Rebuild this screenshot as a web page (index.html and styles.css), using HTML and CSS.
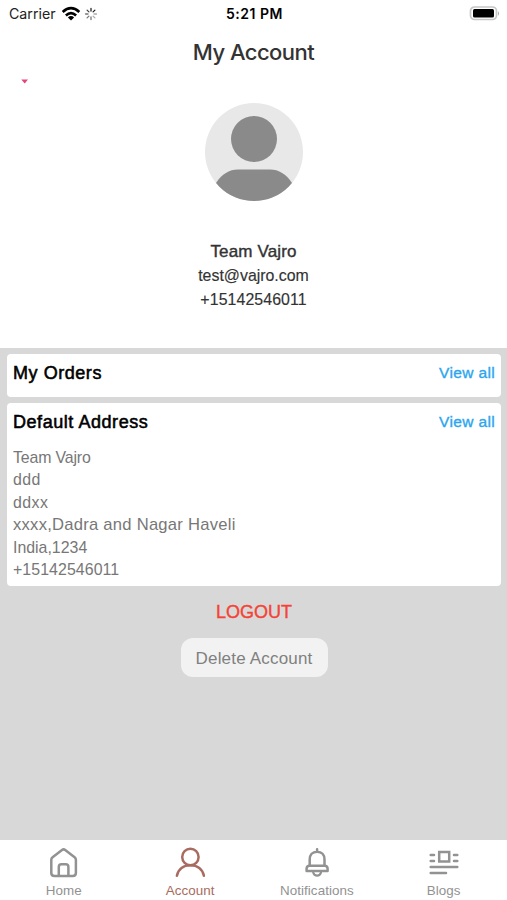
FILE: index.html
```html
<!DOCTYPE html>
<html lang="en">
<head>
<meta charset="utf-8">
<title>My Account</title>
<link rel="stylesheet" href="styles.css">
</head>
<body>
<div class="status">
  <div class="carrier">
    <span>Carrier</span>
    <svg class="wifi" width="20" height="16" viewBox="0 0 20 16"><g fill="none" stroke="#000" stroke-width="2.7"><path d="M1.7 5.9Q10-1.7 18.3 5.9"/><path d="M4.9 9.4Q10 4.8 15.1 9.4"/></g><path d="M6.9 11.4Q10 8.8 13.1 11.4L10 14.6Z"/></svg>
    <svg class="spinner" width="14" height="14" viewBox="-7 -7 14 14" stroke-width="1.3" stroke-linecap="round"><g stroke="#222"><path d="M0-3V-5.5M2.1-2.1L3.9-3.9"/></g><g stroke="#aaa"><path d="M3 0H5.5M2.1 2.1L3.9 3.9"/></g><g stroke="#777"><path d="M0 3V5.5M-2.1 2.1L-3.9 3.9M-3 0H-5.5"/></g><path stroke="#444" d="M-2.1-2.1L-3.9-3.9"/></svg>
  </div>
  <div class="time">5:21 PM</div>
  <svg class="battery" width="31" height="16" viewBox="0 0 31 16"><rect x="1.5" y="1" width="26" height="12.500" rx="4" fill="#fff" stroke="#c6c6c6" stroke-width="1.7"/><rect x="4" y="3" width="21" height="8.600" rx="1.5"/><path d="M29 5.2Q31 7.4 29 9.8Z" fill="#aaa"/></svg>
</div>
<h1>My Account</h1>
<div class="marker"><svg width="8" height="5" viewBox="0 0 8 5"><path d="M.3.5H7L3.700 4.500Z" fill="#e7447c"/></svg></div>
<section class="profile">
  <svg class="avatar" width="98" height="98" viewBox="0 0 98 98"><defs><clipPath id="disc"><circle cx="49" cy="49" r="49"/></clipPath></defs><g clip-path="url(#disc)"><rect width="98" height="98" fill="#e8e8e8"/><circle cx="49" cy="36" r="23" fill="#8a8a8a"/><path d="M11 80C17 71 24 66.500 33 66.500H65C74 66.500 81 71 87 80V98H11Z" fill="#8a8a8a"/></g></svg>
  <div class="name">Team Vajro</div>
  <div class="contact">test@vajro.com</div>
  <div class="contact phone">+15142546011</div>
</section>
<main>
  <section class="card orders">
    <header><h2>My Orders</h2><a>View all</a></header>
  </section>
  <section class="card address">
    <header><h2>Default Address</h2><a>View all</a></header>
    <div class="lines">
      <div class="person">Team Vajro</div>
      <div class="street">ddd</div>
      <div class="street">ddxx</div>
      <div class="region">xxxx,Dadra and Nagar Haveli</div>
      <div>India,1234</div>
      <div class="tel">+15142546011</div>
    </div>
  </section>
  <div class="logout">LOGOUT</div>
  <div class="delete">Delete Account</div>
</main>
<nav>
  <div class="tab">
    <svg width="32" height="32" viewBox="0 0 32 32" fill="none" stroke="currentColor" stroke-width="2.500" stroke-linejoin="round"><path d="M4.300 12.800Q4.300 11.200 5.600 10.200L15 3Q16.600 1.800 18.200 3L27.600 10.200Q28.900 11.200 28.900 12.800V26Q28.900 29 25.700 29H7.500Q4.300 29 4.300 26Z"/><path d="M11.800 28.500V20Q11.800 17.300 14.500 17.300H18.700Q21.400 17.300 21.400 20V28.500"/></svg>
    <span class="home">Home</span>
  </div>
  <div class="tab active">
    <svg width="32" height="32" viewBox="0 0 32 32" fill="none" stroke="currentColor" stroke-width="2.500" stroke-linecap="round"><circle cx="16.400" cy="10" r="8.200"/><path d="M2.900 28.700C4.300 22.300 9.300 18.200 16.400 18.200S28.500 22.300 29.900 28.700"/></svg>
    <span>Account</span>
  </div>
  <div class="tab">
    <svg width="32" height="32" viewBox="0 0 32 32" fill="none" stroke="currentColor" stroke-width="2.500" stroke-linejoin="round" stroke-linecap="round"><path d="M16.100 2.300V4.500M8.700 18.500V12.500C8.700 8 11.400 4.800 16.100 4.800S23.500 8 23.500 12.500V18.500"/><path d="M8 18.700H24.200Q26.500 19.200 26.600 21.500V24H5.600V21.500Q5.700 19.200 8 18.700Z"/><path d="M12.200 25.500Q13.200 28.700 16.100 28.700T20 25.500" stroke-width="2.200"/></svg>
    <span>Notifications</span>
  </div>
  <div class="tab">
    <svg width="32" height="32" viewBox="0 0 32 32" fill="none" stroke="currentColor" stroke-width="2.500" stroke-linecap="round"><rect x="11.200" y="5" width="10" height="9.500"/><path d="M2.700 8H6M2.700 14H6M26 8H29.300M26 14H29.300M2.700 20H29.300M2.700 26H18"/></svg>
    <span>Blogs</span>
  </div>
</nav>
</body>
</html>
```

FILE: styles.css
```css
* { box-sizing: border-box; }
body {
  margin: 0;
  width: 507px;
  height: 900px;
  display: flex;
  flex-direction: column;
  background: #fff;
  font-family: "Liberation Sans", Arial, sans-serif;
  overflow: hidden;
  white-space: nowrap;
}
h1, h2 { margin: 0; font-weight: 400; }
.status {
  height: 27px;
  display: grid;
  grid-template-columns: 1fr auto 1fr;
  align-items: center;
  padding: 0 7px 0 9px;
  font-family: Inter, sans-serif;
  font-size: 14.200px;
  color: #222;
}
.carrier { display: flex; align-items: center; }
.wifi { margin-left: 5px; }
.spinner { margin-left: 3px; }
.time { font-weight: 600; color: #000; font-size: 14px; letter-spacing: .5px; }
.battery { justify-self: end; }
h1 {
  height: 50px;
  line-height: 50px;
  text-align: center;
  font-family: Inter, sans-serif;
  font-size: 22px;
  font-weight: 500;
  letter-spacing: -.55px;
  color: #333;
}
.marker { height: 26px; padding: 2px 0 0 21px; line-height: 0; }
.profile {
  height: 245px;
  display: flex;
  flex-direction: column;
  align-items: center;
  color: #333;
}
.avatar { flex: none; margin-bottom: 39px; }
.name { height: 24px; line-height: 24px; font-size: 17px; letter-spacing: .15px; -webkit-text-stroke: .4px; }
.contact { height: 24px; line-height: 24px; font-size: 15.900px; -webkit-text-stroke: .15px; }
.phone { letter-spacing: .08px; }
main {
  flex: 1;
  background: #d8d8d8;
  padding: 6px 6px 0 7px;
  display: flex;
  flex-direction: column;
  align-items: center;
}
.card { align-self: stretch; background: #fff; border-radius: 4px; padding: 0 6px; }
.orders { height: 43px; margin-bottom: 6px; }
.address { height: 183px; }
header { height: 38px; display: flex; justify-content: space-between; align-items: center; }
h2 { font-size: 18px; letter-spacing: .55px; color: #000; -webkit-text-stroke: .55px; }
header a { font-size: 15.500px; letter-spacing: .35px; color: #2ba5ee; -webkit-text-stroke: .35px; }
.lines { padding-top: 6px; font-size: 15.900px; line-height: 22.400px; color: #777; }
.person { letter-spacing: -.15px; }
.street { letter-spacing: .45px; }
.region { font-size: 16.600px; letter-spacing: .25px; }
.tel { letter-spacing: .08px; }
.logout { height: 52px; line-height: 53px; font-size: 18px; color: #f44336; -webkit-text-stroke: .4px; }
.delete {
  width: 147px;
  height: 39px;
  line-height: 41px;
  border-radius: 12px;
  background: #f2f2f2;
  color: #808080;
  text-align: center;
  font-size: 17px;
  letter-spacing: .18px;
}
nav { height: 60px; display: grid; grid-template-columns: repeat(4, 1fr); background: #fff; padding-top: 7px; }
.tab { display: flex; flex-direction: column; align-items: center; color: #929292; font-size: 13.400px; }
.tab span { line-height: 15px; margin-top: 4px; letter-spacing: .08px; }
.tab .home { padding-left: 1px; }
.active { color: #a96b60; }
```
